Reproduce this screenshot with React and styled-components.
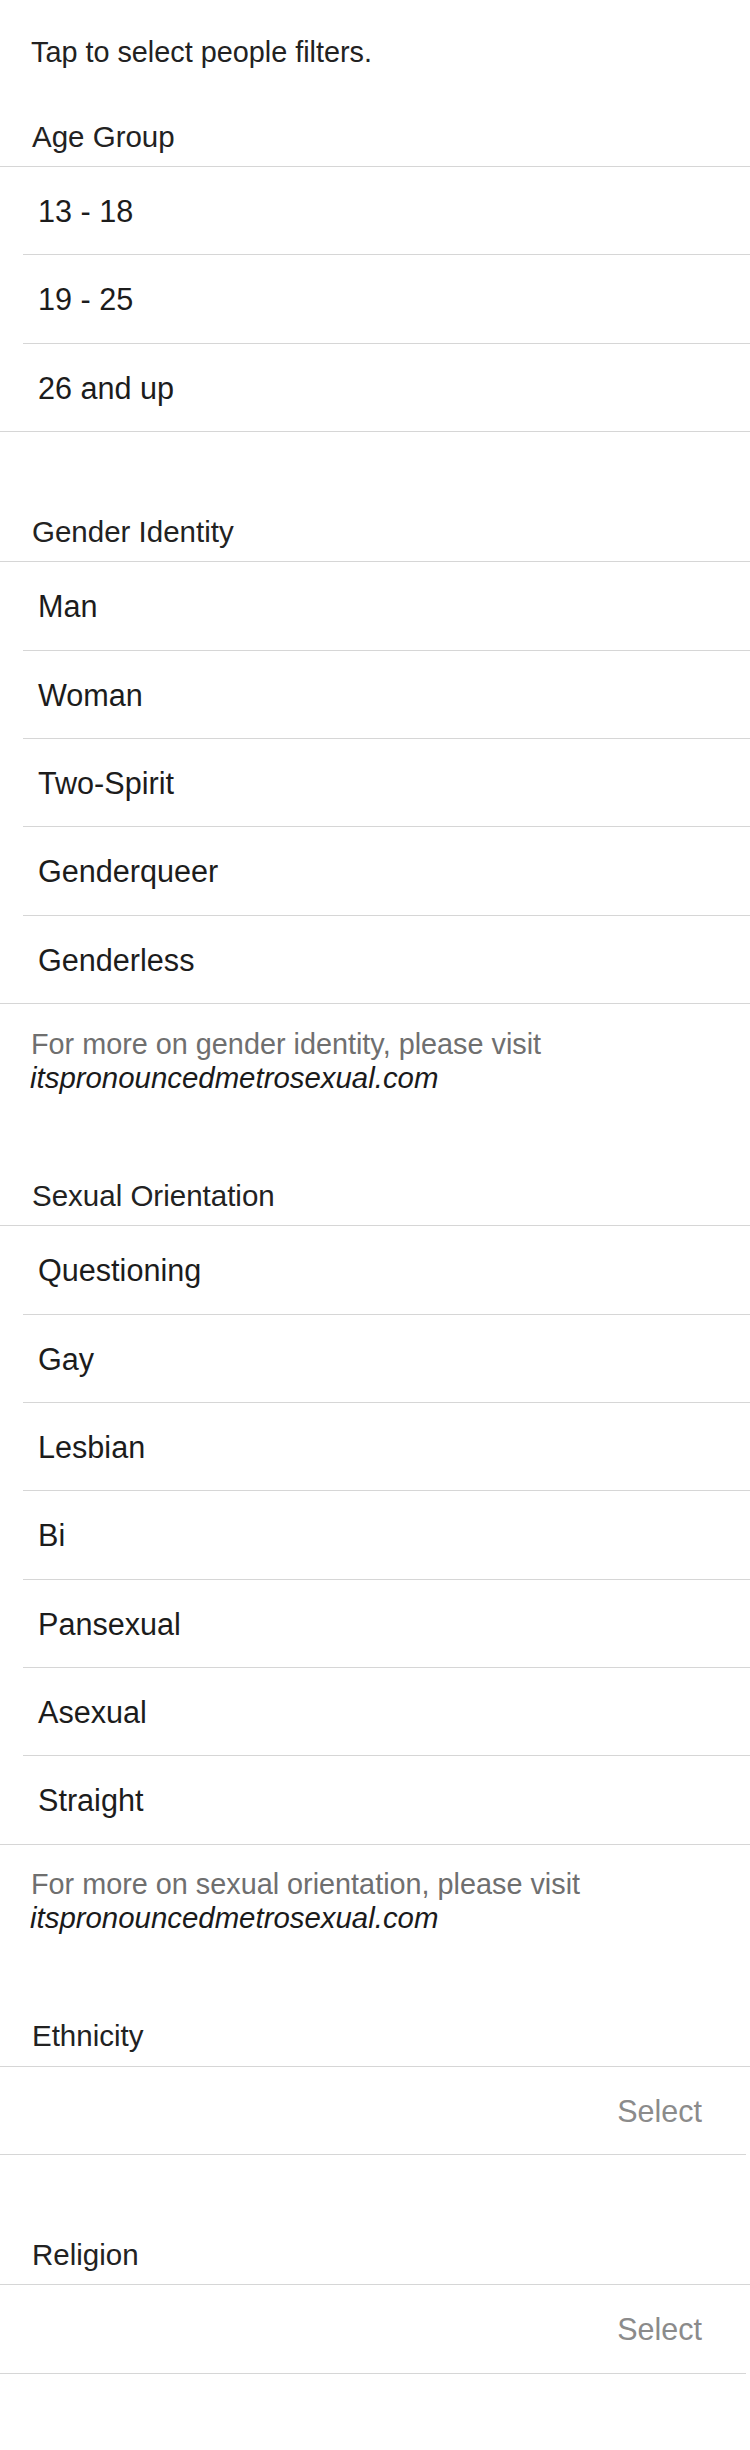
import React from 'react'
import styled, { createGlobalStyle } from 'styled-components'

const GlobalStyle = createGlobalStyle`
  html, body {
    margin: 0;
    padding: 0;
    background: #ffffff;
  }
  body {
    font-family: "Liberation Sans", Arial, Helvetica, sans-serif;
    color: #1f1f1f;
  }
`

const Page = styled.div`
  width: 750px;
  min-height: 2450px;
  background: #fff;
`

const Intro = styled.p`
  margin: 0;
  padding: 35px 0 0 31px;
  font-size: 28.8px;
  line-height: 34px;
  color: #222;
`

const Header = styled.div`
  padding: ${({ $first }) => ($first ? '49.5px' : '81.5px')} 0 11.5px 32px;
  font-size: 29.5px;
  line-height: 36px;
  color: #222;
  border-bottom: 1px solid #d6d6d6;
`

const List = styled.div`
  border-bottom: 1px solid #d6d6d6;
`

const Option = styled.div`
  margin-left: 23px;
  padding: 2px 0 0 15px;
  height: 85.4px;
  line-height: 85.4px;
  font-size: 30.6px;
  color: #1c1c1c;
  border-bottom: 1px solid #d6d6d6;

  &:last-child {
    border-bottom: none;
  }
`

const Note = styled.p`
  margin: 0;
  padding: 22.5px 0 1.5px 31px;
  font-size: 28.8px;
  line-height: 34px;
  color: #6f6f6f;
`

const Link = styled.em`
  display: block;
  margin-left: -1px;
  font-size: 29.4px;
  color: #1a1a1a;
`

const SelectRow = styled.div`
  margin-right: 4px;
  padding: 2px 44px 0 0;
  height: 85.4px;
  line-height: 85.4px;
  text-align: right;
  font-size: 30.5px;
  color: #8b8b8b;
  border-bottom: 1px solid #d6d6d6;
`

const sections = [
  { title: 'Age Group', options: ['13 - 18', '19 - 25', '26 and up'] },
  {
    title: 'Gender Identity',
    options: ['Man', 'Woman', 'Two-Spirit', 'Genderqueer', 'Genderless'],
    note: 'gender identity',
  },
  {
    title: 'Sexual Orientation',
    options: ['Questioning', 'Gay', 'Lesbian', 'Bi', 'Pansexual', 'Asexual', 'Straight'],
    note: 'sexual orientation',
  },
  { title: 'Ethnicity', select: true },
  { title: 'Religion', select: true },
]

function Section({ title, options, note, select, first }) {
  return (
    <section>
      <Header $first={first}>{title}</Header>
      {select ? (
        <SelectRow>Select</SelectRow>
      ) : (
        <List>
          {options.map((o) => (
            <Option key={o}>{o}</Option>
          ))}
        </List>
      )}
      {note && (
        <Note>
          For more on {note}, please visit
          <Link>itspronouncedmetrosexual.com</Link>
        </Note>
      )}
    </section>
  )
}

export default function App() {
  return (
    <Page>
      <GlobalStyle />
      <Intro>Tap to select people filters.</Intro>
      {sections.map((s, i) => (
        <Section key={s.title} {...s} first={i === 0} />
      ))}
    </Page>
  )
}
